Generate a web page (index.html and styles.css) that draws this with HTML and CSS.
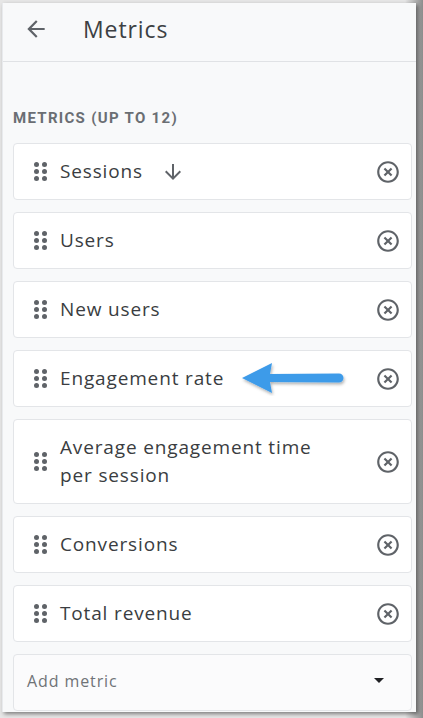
FILE: index.html
```html
<!DOCTYPE html>
<html>
<head>
<meta charset="utf-8">
<link rel="stylesheet" href="styles.css">
</head>
<body>
<div class="panel">
  <header class="header">
    <svg class="back" viewBox="0 0 24 24" width="26" height="26"><path d="M20 11H7.83l5.59-5.59L12 4l-8 8 8 8 1.41-1.41L7.83 13H20v-2z" fill="#5f6368"/></svg>
    <h1 class="title">Metrics</h1>
  </header>
  <section class="content">
    <div class="label">METRICS (UP TO 12)</div>
    <div class="list">
      <div class="card">
        <span class="handle"><i></i><i></i><i></i><i></i><i></i><i></i></span>
        <span class="name">Sessions</span>
        <svg class="sort" viewBox="0 0 24 24" width="24" height="24"><path d="M20 12l-1.41-1.41L13 16.17V4h-2v12.17l-5.58-5.59L4 12l8 8 8-8z" fill="#5f6368"/></svg>
        <svg class="close" viewBox="0 0 24 24" width="26" height="26"><path d="M14.59 8L12 10.59 9.41 8 8 9.41 10.59 12 8 14.59 9.41 16 12 13.41 14.59 16 16 14.59 13.41 12 16 9.41 14.59 8zM12 2C6.47 2 2 6.47 2 12s4.47 10 10 10 10-4.47 10-10S17.53 2 12 2zm0 18c-4.41 0-8-3.59-8-8s3.59-8 8-8 8 3.59 8 8-3.59 8-8 8z" fill="#5f6368"/></svg>
      </div>
      <div class="card">
        <span class="handle"><i></i><i></i><i></i><i></i><i></i><i></i></span>
        <span class="name">Users</span>
        <svg class="close" viewBox="0 0 24 24" width="26" height="26"><path d="M14.59 8L12 10.59 9.41 8 8 9.41 10.59 12 8 14.59 9.41 16 12 13.41 14.59 16 16 14.59 13.41 12 16 9.41 14.59 8zM12 2C6.47 2 2 6.47 2 12s4.47 10 10 10 10-4.47 10-10S17.53 2 12 2zm0 18c-4.41 0-8-3.59-8-8s3.59-8 8-8 8 3.59 8 8-3.59 8-8 8z" fill="#5f6368"/></svg>
      </div>
      <div class="card">
        <span class="handle"><i></i><i></i><i></i><i></i><i></i><i></i></span>
        <span class="name">New users</span>
        <svg class="close" viewBox="0 0 24 24" width="26" height="26"><path d="M14.59 8L12 10.59 9.41 8 8 9.41 10.59 12 8 14.59 9.41 16 12 13.41 14.59 16 16 14.59 13.41 12 16 9.41 14.59 8zM12 2C6.47 2 2 6.47 2 12s4.47 10 10 10 10-4.47 10-10S17.53 2 12 2zm0 18c-4.41 0-8-3.59-8-8s3.59-8 8-8 8 3.59 8 8-3.59 8-8 8z" fill="#5f6368"/></svg>
      </div>
      <div class="card">
        <span class="handle"><i></i><i></i><i></i><i></i><i></i><i></i></span>
        <span class="name">Engagement rate</span>
        <svg class="pointer" viewBox="0 0 110 34" width="110" height="34"><defs><filter id="sh" x="-10%" y="-20%" width="130%" height="160%"><feDropShadow dx="1" dy="2" stdDeviation="1.5" flood-color="#000" flood-opacity="0.3"/></filter></defs><g filter="url(#sh)" fill="#3d9be9"><path d="M1 16 L31 1 L29 12 L98 11.5 A4.5 4.5 0 0 1 98 20.5 L29 20 L31 31 Z"/></g></svg>
        <svg class="close" viewBox="0 0 24 24" width="26" height="26"><path d="M14.59 8L12 10.59 9.41 8 8 9.41 10.59 12 8 14.59 9.41 16 12 13.41 14.59 16 16 14.59 13.41 12 16 9.41 14.59 8zM12 2C6.47 2 2 6.47 2 12s4.47 10 10 10 10-4.47 10-10S17.53 2 12 2zm0 18c-4.41 0-8-3.59-8-8s3.59-8 8-8 8 3.59 8 8-3.59 8-8 8z" fill="#5f6368"/></svg>
      </div>
      <div class="card tall">
        <span class="handle"><i></i><i></i><i></i><i></i><i></i><i></i></span>
        <span class="name">Average engagement time<br>per session</span>
        <svg class="close" viewBox="0 0 24 24" width="26" height="26"><path d="M14.59 8L12 10.59 9.41 8 8 9.41 10.59 12 8 14.59 9.41 16 12 13.41 14.59 16 16 14.59 13.41 12 16 9.41 14.59 8zM12 2C6.47 2 2 6.47 2 12s4.47 10 10 10 10-4.47 10-10S17.53 2 12 2zm0 18c-4.41 0-8-3.59-8-8s3.59-8 8-8 8 3.59 8 8-3.59 8-8 8z" fill="#5f6368"/></svg>
      </div>
      <div class="card">
        <span class="handle"><i></i><i></i><i></i><i></i><i></i><i></i></span>
        <span class="name">Conversions</span>
        <svg class="close" viewBox="0 0 24 24" width="26" height="26"><path d="M14.59 8L12 10.59 9.41 8 8 9.41 10.59 12 8 14.59 9.41 16 12 13.41 14.59 16 16 14.59 13.41 12 16 9.41 14.59 8zM12 2C6.47 2 2 6.47 2 12s4.47 10 10 10 10-4.47 10-10S17.53 2 12 2zm0 18c-4.41 0-8-3.59-8-8s3.59-8 8-8 8 3.59 8 8-3.59 8-8 8z" fill="#5f6368"/></svg>
      </div>
      <div class="card">
        <span class="handle"><i></i><i></i><i></i><i></i><i></i><i></i></span>
        <span class="name">Total revenue</span>
        <svg class="close" viewBox="0 0 24 24" width="26" height="26"><path d="M14.59 8L12 10.59 9.41 8 8 9.41 10.59 12 8 14.59 9.41 16 12 13.41 14.59 16 16 14.59 13.41 12 16 9.41 14.59 8zM12 2C6.47 2 2 6.47 2 12s4.47 10 10 10 10-4.47 10-10S17.53 2 12 2zm0 18c-4.41 0-8-3.59-8-8s3.59-8 8-8 8 3.59 8 8-3.59 8-8 8z" fill="#5f6368"/></svg>
      </div>
      <div class="card add">
        <span class="placeholder">Add metric</span>
        <span class="caret"></span>
      </div>
    </div>
  </section>
</div>
</body>
</html>
```
FILE: styles.css
```css
html, body {
  margin: 0;
  padding: 0;
}
body {
  width: 423px;
  height: 718px;
  background: linear-gradient(90deg, #e6e6e6 0, #e6e6e6 405px, #8d8d8d 423px);
  font-family: Roboto, "Noto Sans", Arial, sans-serif;
  overflow: hidden;
  padding-top: 3px;
  padding-left: 2px;
  box-sizing: border-box;
}
.panel {
  width: 414px;
  height: 709px;
  background: #f8f9fa;
  border-left: 1px solid #e8eaed;
  box-shadow: 2px 2px 4px rgba(0,0,0,0.45);
  box-sizing: border-box;
}
.header {
  height: 59px;
  display: flex;
  align-items: center;
  border-bottom: 1px solid #e0e2e5;
  padding-left: 20px;
  box-sizing: border-box;
  padding-bottom: 7px;
}
.back {
  display: block;
}
.title {
  margin: 0 0 0 34px;
  font-family: "Open Sans", Roboto, sans-serif;
  font-size: 23px;
  font-weight: 400;
  color: #3c4043;
  letter-spacing: 0.9px;
}
.content {
  padding: 0 0 0 10px;
}
.label {
  margin-top: 47px;
  height: 18px;
  line-height: 18px;
  font-size: 15px;
  font-weight: 700;
  color: #6a6e73;
  letter-spacing: 1.3px;
}
.list {
  margin-top: 16px;
  display: flex;
  flex-direction: column;
  gap: 12px;
  width: 399px;
}
.card {
  position: relative;
  height: 57px;
  background: #fff;
  border: 1px solid #e3e5e8;
  border-radius: 4px;
  box-sizing: border-box;
  display: flex;
  align-items: center;
  padding: 0 10px 0 20px;
}
.card.tall {
  height: 85px;
}
.handle {
  display: grid;
  grid-template-columns: 5px 5px;
  grid-auto-rows: 5px;
  column-gap: 3px;
  row-gap: 2px;
  width: 13px;
  flex: none;
}
.handle i {
  display: block;
  width: 5px;
  height: 5px;
  border-radius: 50%;
  background: #5f6368;
}
.name {
  margin-left: 13px;
  margin-bottom: 2px;
  font-family: "Open Sans", Roboto, sans-serif;
  font-size: 19px;
  line-height: 28px;
  color: #3a3d41;
  letter-spacing: 0.85px;
}
.sort {
  margin-left: 18px;
  display: block;
}
.close {
  margin-left: auto;
  display: block;
  flex: none;
}
.pointer {
  position: absolute;
  left: 227px;
  top: 11px;
}
.card.add {
  background: #fbfbfc;
  padding: 0 27px 4px 13px;
}
.placeholder {
  font-family: "Open Sans", Roboto, sans-serif;
  font-size: 16px;
  color: #6f7377;
  letter-spacing: 0.9px;
}
.caret {
  margin-left: auto;
  width: 0;
  height: 0;
  border-left: 5px solid transparent;
  border-right: 5px solid transparent;
  border-top: 5px solid #202124;
}
```
